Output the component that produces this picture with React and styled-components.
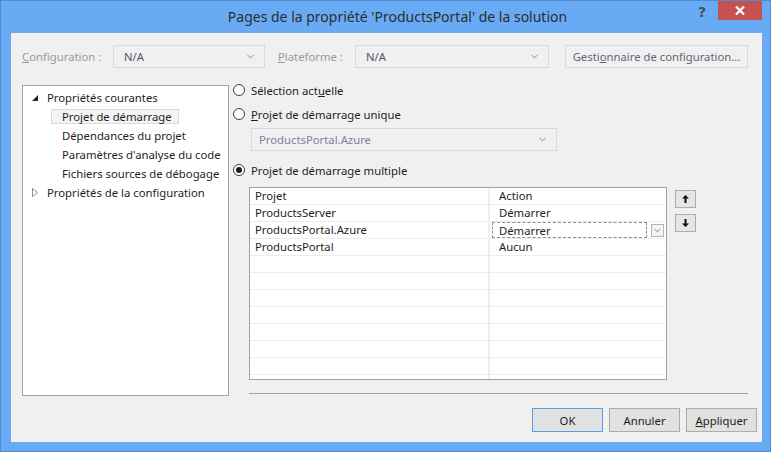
import React from 'react';
import styled, { createGlobalStyle } from 'styled-components';

const Global = createGlobalStyle`
  html, body { margin: 0; padding: 0; background: #69aaf4; }
  body { font-family: "Noto Sans", "Open Sans", sans-serif; font-size: 11.3px; color: #1e1e1e; }
  * { box-sizing: border-box; }
`;

const Window = styled.div`
  width: 771px;
  height: 452px;
  border: 1px solid #4f8bd0;
  background: #69aaf4;
  display: flex;
  flex-direction: column;
`;

const TitleBar = styled.div`
  height: 32px;
  display: grid;
  grid-template-columns: 1fr auto 1fr;
  align-items: start;
`;

const Title = styled.div`
  grid-column: 2;
  padding-left: 24px;
  font-size: 14px;
  line-height: 32px;
  color: #2d2d2d;
  white-space: nowrap;
`;

const WinControls = styled.div`
  grid-column: 3;
  display: flex;
  justify-content: flex-end;
  align-items: flex-start;
  padding-right: 8px;
`;

const Help = styled.div`
  font-family: "DejaVu Sans", sans-serif;
  font-weight: bold;
  font-size: 14px;
  color: #474f5a;
  margin: 3px 12px 0 0;
`;

const Close = styled.div`
  width: 44px;
  height: 19px;
  background: #c75050;
  display: flex;
  align-items: center;
  justify-content: center;
`;

const Body = styled.div`
  flex: 1;
  margin: 0 8px 9px 10px;
  background: #f0f0f0;
  padding: 12px 5px 10px 11px;
  display: flex;
  flex-direction: column;
`;

const ConfigRow = styled.div`
  display: flex;
  align-items: center;
  height: 23px;
  margin-right: 9px;
`;

const Label = styled.div`
  width: ${p => p.$w}px;
  margin-left: ${p => p.$ml || 0}px;
  color: #9a9a9a;
  white-space: nowrap;
`;

const Combo = styled.div`
  width: ${p => p.$w}px;
  height: 23px;
  border: 1px solid #d9d9d9;
  background: #f0f0f0;
  display: flex;
  align-items: center;
  justify-content: space-between;
  padding: 0 10px 0 ${p => p.$pl || 10}px;
  color: ${p => p.$muted ? '#8a7b9c' : '#5c5068'};
  margin-left: ${p => p.$ml || 0}px;
`;

const Chevron = () => (
  <svg width="7" height="5" viewBox="0 0 7 5">
    <path d="M0.5 0.8 L3.5 3.8 L6.5 0.8" fill="none" stroke="#a8a8a8" strokeWidth="1.1" />
  </svg>
);

const PlainButton = styled.div`
  width: ${p => p.$w}px;
  height: ${p => p.$h || 23}px;
  margin-left: ${p => p.$ml || 0}px;
  border: 1px solid ${p => p.$focus ? '#569de5' : p.$disabled ? '#d9d9d9' : '#adadad'};
  background: ${p => p.$disabled ? '#f0f0f0' : '#e1e1e1'};
  color: ${p => p.$disabled ? '#6d6079' : '#1e1e1e'};
  display: flex;
  align-items: center;
  justify-content: center;
  white-space: nowrap;
`;

const Main = styled.div`
  display: flex;
  margin-top: 17px;
  height: 311px;
  margin-right: 9px;
`;

const Tree = styled.div`
  width: 207px;
  border: 1px solid #a5a5a5;
  background: #fff;
  padding-top: 2px;
`;

const TreeRow = styled.div`
  height: 19px;
  display: flex;
  align-items: center;
  white-space: nowrap;
`;

const Toggle = styled.span`
  width: 14px;
  margin-left: 9px;
  display: inline-flex;
  align-items: center;
`;

const TreeLabel = styled.span`
  padding-left: 1px;
`;

const ChildLabel = styled.span`
  margin-left: 28px;
  height: 15px;
  display: inline-flex;
  align-items: center;
  padding: 0 6px 0 10px;
  border: 1px solid ${p => p.$selected ? '#dadada' : 'transparent'};
  background: ${p => p.$selected ? '#f3f3f3' : 'transparent'};
`;

const RightPanel = styled.div`
  flex: 1;
  margin-left: 4px;
  display: flex;
  flex-direction: column;
`;

const RadioRow = styled.div`
  height: 14px;
  display: flex;
  align-items: center;
  gap: 6px;
  margin-top: ${p => p.$mt || 0}px;
  white-space: nowrap;
`;

const RadioCircle = styled.span`
  width: 12px;
  height: 12px;
  border-radius: 50%;
  border: 1px solid #3c3c3c;
  background: #fff;
  display: inline-flex;
  align-items: center;
  justify-content: center;
  &::after {
    content: '';
    width: 6px;
    height: 6px;
    border-radius: 50%;
    background: ${p => p.$checked ? '#1a1a1a' : 'transparent'};
  }
`;

const Indented = styled.div`
  margin-left: 18px;
  margin-top: ${p => p.$mt || 0}px;
`;

const GridArea = styled.div`
  display: flex;
  margin-left: 16px;
  margin-top: 10px;
`;

const Grid = styled.div`
  width: 418px;
  height: 193px;
  border: 1px solid #a0a0a0;
  background: #fff;
  overflow: hidden;
`;

const GridRow = styled.div`
  display: grid;
  grid-template-columns: 240px 1fr;
  height: 17px;
  border-bottom: 1px solid #ececec;
`;

const Cell = styled.div`
  display: flex;
  align-items: center;
  padding-left: ${p => p.$pl}px;
  padding-bottom: 1px;
  border-right: ${p => p.$split ? '2px solid #efefef' : 'none'};
  white-space: nowrap;
`;

const EditBox = styled.div`
  display: flex;
  align-items: center;
  gap: 4px;
  padding-left: 2px;
`;

const Dashed = styled.div`
  width: 155px;
  height: 16px;
  border: 1px dashed #8e8e8e;
  padding-left: 6px;
  display: flex;
  align-items: center;
`;

const DropBtn = styled.div`
  width: 13px;
  height: 13px;
  border: 1px solid #b5b5b5;
  background: #f4f4f4;
  display: flex;
  align-items: center;
  justify-content: center;
`;

const ArrowCol = styled.div`
  margin-left: 8px;
  padding-top: 3px;
  display: flex;
  flex-direction: column;
  gap: 6px;
`;

const ArrowBtn = styled.div`
  width: 21px;
  height: 18px;
  border: 1px solid #adadad;
  background: #e6e6e6;
  display: flex;
  align-items: center;
  justify-content: center;
`;

const Separator = styled.div`
  margin: 13px 0 0 16px;
  border-top: 1px solid #a0a0a0;
`;

const Footer = styled.div`
  margin-top: 12px;
  display: flex;
  justify-content: flex-end;
  gap: 6px;
`;

const Arrow = ({ down }) => (
  <svg width="7" height="8" viewBox="0 0 7 8" style={down ? { transform: 'rotate(180deg)' } : undefined}>
    <path d="M3.5 0 L7 3.5 L4.5 3.5 L4.5 8 L2.5 8 L2.5 3.5 L0 3.5 Z" fill="#111" />
  </svg>
);

const rows = [
  ['Projet', 'Action'],
  ['ProductsServer', 'Démarrer'],
  ['ProductsPortal.Azure', 'Démarrer', true],
  ['ProductsPortal', 'Aucun'],
];
const empty = Array.from({ length: 8 });

export default function App() {
  return (
    <>
      <Global />
      <Window>
        <TitleBar>
          <Title>Pages de la propriété 'ProductsPortal' de la solution</Title>
          <WinControls>
            <Help>?</Help>
            <Close>
              <svg width="10" height="9" viewBox="0 0 10 9">
                <path d="M1 0.5 L9 8.5 M9 0.5 L1 8.5" stroke="#fff" strokeWidth="2.2" />
              </svg>
            </Close>
          </WinControls>
        </TitleBar>

        <Body>
          <ConfigRow>
            <Label $w={91}><u>C</u>onfiguration :</Label>
            <Combo $w={152}>N/A<Chevron /></Combo>
            <Label $w={77} $ml={13}><u>P</u>lateforme :</Label>
            <Combo $w={194}>N/A<Chevron /></Combo>
            <PlainButton $w={183} $ml={16} $disabled><span>Gesti<u>o</u>nnaire de configuration...</span></PlainButton>
          </ConfigRow>

          <Main>
            <Tree>
              <TreeRow>
                <Toggle>
                  <svg width="6" height="6" viewBox="0 0 6 6"><path d="M6 0 L6 6 L0 6 Z" fill="#262626" /></svg>
                </Toggle>
                <TreeLabel>Propriétés courantes</TreeLabel>
              </TreeRow>
              <TreeRow><ChildLabel $selected>Projet de démarrage</ChildLabel></TreeRow>
              <TreeRow><ChildLabel>Dépendances du projet</ChildLabel></TreeRow>
              <TreeRow><ChildLabel>Paramètres d'analyse du code</ChildLabel></TreeRow>
              <TreeRow><ChildLabel>Fichiers sources de débogage</ChildLabel></TreeRow>
              <TreeRow>
                <Toggle>
                  <svg width="6" height="9" viewBox="0 0 6 9"><path d="M0.5 0.5 L5.5 4.5 L0.5 8.5 Z" fill="none" stroke="#8a8a8a" /></svg>
                </Toggle>
                <TreeLabel>Propriétés de la configuration</TreeLabel>
              </TreeRow>
            </Tree>

            <RightPanel>
              <RadioRow $mt={-2}><RadioCircle /><span>Sélection act<u>u</u>elle</span></RadioRow>
              <RadioRow $mt={10}><RadioCircle /><span><u>P</u>rojet de démarrage unique</span></RadioRow>
              <Indented $mt={7}>
                <Combo $w={306} $pl={7} $muted>ProductsPortal.Azure<Chevron /></Combo>
              </Indented>
              <RadioRow $mt={12}><RadioCircle $checked /><span>Projet de démarrage multiple</span></RadioRow>

              <GridArea>
                <Grid>
                  {rows.map(([name, action, editing], i) => (
                    <GridRow key={i}>
                      <Cell $pl={5} $split>{name}</Cell>
                      {editing ? (
                        <EditBox>
                          <Dashed>{action}</Dashed>
                          <DropBtn><Chevron /></DropBtn>
                        </EditBox>
                      ) : (
                        <Cell $pl={9}>{action}</Cell>
                      )}
                    </GridRow>
                  ))}
                  {empty.map((_, i) => (
                    <GridRow key={'e' + i}>
                      <Cell $pl={5} $split />
                      <Cell $pl={9} />
                    </GridRow>
                  ))}
                </Grid>
                <ArrowCol>
                  <ArrowBtn><Arrow /></ArrowBtn>
                  <ArrowBtn><Arrow down /></ArrowBtn>
                </ArrowCol>
              </GridArea>
              <Separator />
            </RightPanel>
          </Main>

          <Footer>
            <PlainButton $w={71} $h={24} $focus>OK</PlainButton>
            <PlainButton $w={71} $h={24}>Annuler</PlainButton>
            <PlainButton $w={71} $h={24}><span><u>A</u>ppliquer</span></PlainButton>
          </Footer>
        </Body>
      </Window>
    </>
  );
}
